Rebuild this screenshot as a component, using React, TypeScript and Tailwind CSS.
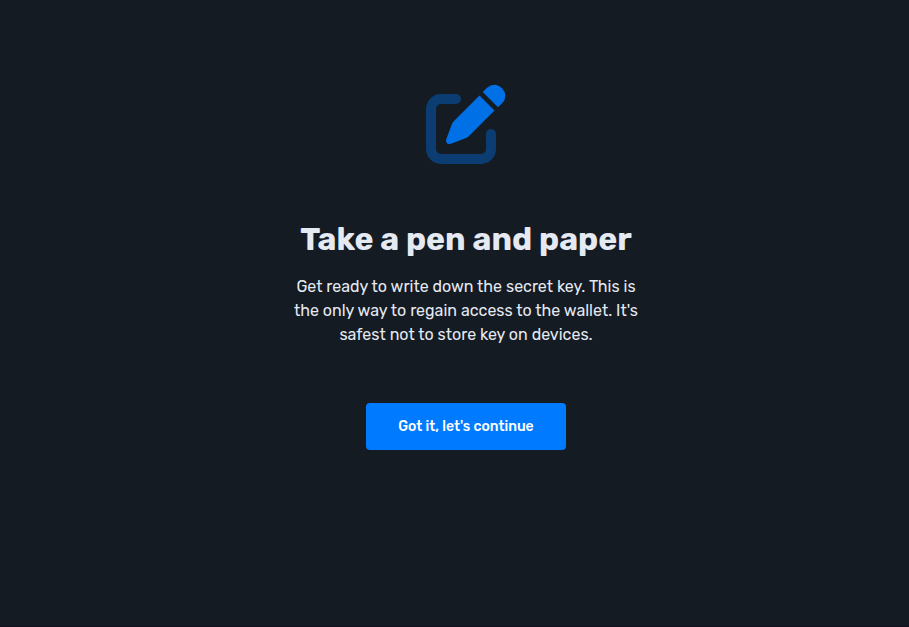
function PenAndPaperIcon() {
  return (
    <svg className="size-20" viewBox="0 0 80 80" fill="none" aria-hidden="true">
      <path
        d="M30 15H15A10 10 0 0 0 5 25V65A10 10 0 0 0 15 75H55A10 10 0 0 0 65 65V50"
        stroke="#0b3d73"
        strokeWidth="10"
        strokeLinecap="round"
      />
      <path
        d="M53.5 11.5L68.5 26.5L43 52Q41.700 53.300 40 54L25 59.700Q22 60.600 20.600 58.800Q19.600 57.500 20.200 55.500L25.500 41Q26 39.300 27.500 37.500Z"
        fill="#0070e6"
      />
      <path
        d="M56.700 8L61 3.700Q64.300 .7 68.500 .7Q72.500 .7 76 4.200Q79.400 7.700 79.400 11.800Q79.400 16 76.400 19L72 23.300Z"
        fill="#0070e6"
      />
    </svg>
  );
}

export default function App() {
  return (
    <div className="flex min-h-screen flex-col border-b border-[#15101f] bg-[#141b22] font-['Rubik','Roboto',sans-serif] text-[#e5e9f2]">
      <main className="flex flex-col items-center pt-21 pl-[23px]">
        <PenAndPaperIcon />
        <h1 className="mt-[55px] text-center text-[32px] leading-10 font-bold">
          Take a pen and paper
        </h1>
        <p className="mt-4 w-[360px] text-center text-base">
          Get ready to write down the secret key. This is the only way to regain
          access to the wallet. It's safest not to store key on devices.
        </p>
        <button
          type="button"
          className="mt-14 h-[47px] w-[200px] rounded bg-[#007bff] text-sm font-medium text-white"
        >
          Got it, let's continue
        </button>
      </main>
    </div>
  );
}
